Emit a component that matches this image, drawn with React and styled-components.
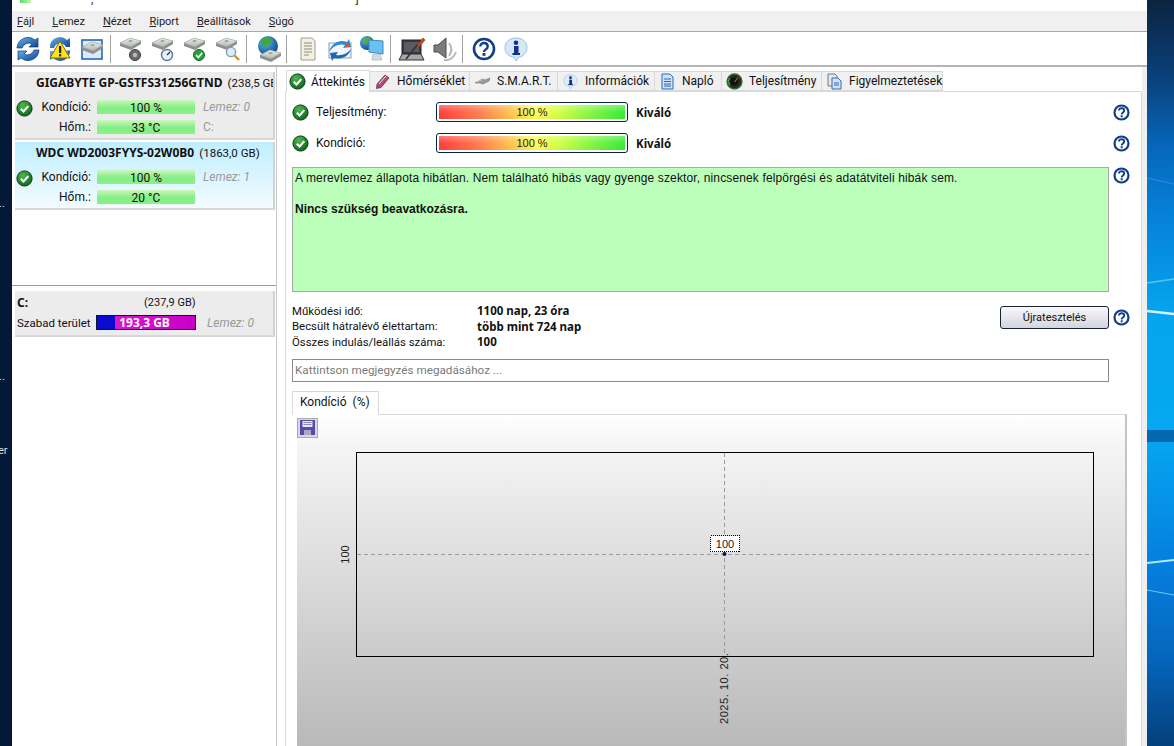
import React from 'react';
import styled, { createGlobalStyle } from 'styled-components';

const GlobalStyle = createGlobalStyle`
  html, body {
    margin: 0;
    padding: 0;
    height: 746px;
    overflow: hidden;
    background: #012;
  }
  * { box-sizing: border-box; }
`;

const UI_FONT = `Roboto, "Noto Sans", sans-serif`;
const ARIAL = `"Liberation Sans", Arial, sans-serif`;

const Desktop = styled.div`
  display: flex;
  width: 1174px;
  height: 746px;
  overflow: hidden;
  font-family: ${UI_FONT};
  font-size: 12px;
  color: #111;
`;

const Wallpaper = styled.svg`
  display: block;
  flex: none;
  width: ${p => p.$w}px;
  height: 746px;
  font-family: ${UI_FONT};
`;

const Win = styled.div`
  flex: none;
  width: 1135px;
  display: flex;
  flex-direction: column;
  background: #fff;
`;

const TitleBar = styled.div`
  height: 11px;
  flex: none;
  display: flex;
  overflow: hidden;
  background: #fff;
  font-size: 12px;
  line-height: 8px;
`;

const AppMark = styled.div`
  width: 11px;
  height: 3px;
  margin-left: 8px;
  background: linear-gradient(90deg, #5fdc5f, #c9f5b8);
`;

const TitleScrap = styled.span`
  margin-top: -5px;
  margin-left: ${p => p.$left}px;
  color: #333;
`;

const MenuBar = styled.div`
  height: 21px;
  flex: none;
  display: flex;
  align-items: center;
  padding-left: 5px;
  gap: 18px;
  background: #f0f0f0;
  border-bottom: 1px solid #a9a9a9;
`;

const MenuItem = styled.span`
  font-size: 11px;
  color: #222;
  span { text-decoration: underline; }
`;

const ToolBar = styled.div`
  height: 35px;
  flex: none;
  display: flex;
  align-items: center;
  background: #fff;
  border-bottom: 2px solid #b4b4b4;
`;

const ToolButton = styled.div`
  width: 32px;
  height: 32px;
  display: flex;
  align-items: center;
  justify-content: center;
  svg { width: 28px; height: 28px; display: block; }
`;

const ToolSep = styled.div`
  width: 1px;
  height: 28px;
  margin: 0 5px 0 2px;
  background: #a0a0a0;
`;

const Body = styled.div`
  flex: 1;
  display: flex;
  min-height: 0;
`;

const Sidebar = styled.aside`
  width: 265px;
  flex: none;
  display: flex;
  flex-direction: column;
  border-right: 1px solid #c8c8c8;
`;

const DiskList = styled.div`
  height: 219px;
  flex: none;
  padding: 5px 1px 0 3px;
  display: flex;
  flex-direction: column;
  gap: 2px;
  border-bottom: 1px solid #9c9c9c;
`;

const VolumeList = styled.div`
  flex: 1;
  padding: 5px 1px 0 3px;
`;

const DiskCard = styled.div`
  height: 68px;
  flex: none;
  padding: 1px 0 0 0;
  overflow: hidden;
  white-space: nowrap;
  background: ${p => (p.$active ? 'linear-gradient(#bfeeff, #f4fcff)' : '#ececec')};
  border-right: 2px solid #d2d2d2;
  border-bottom: 2px solid #d8d8d8;
`;

const DiskName = styled.div`
  margin-left: 21px;
  height: 20px;
  line-height: 20px;
  font-family: "Noto Sans", sans-serif;
  font-size: 12px;
  b { font-weight: 700; margin-right: 2px; }
  span { font-family: ${UI_FONT}; font-size: 11.5px; }
`;

const DiskInfo = styled.div`
  display: flex;
  align-items: flex-start;
  margin-top: 4px;
  padding-left: 1px;
`;

const StatusCol = styled.div`
  width: 16px;
  flex: none;
  margin-top: 3px;
  svg { display: block; width: 17px; height: 17px; }
`;

const Grid = styled.div`
  display: grid;
  grid-template-columns: 59px 98px auto;
  grid-auto-rows: 20px;
  align-items: center;
  column-gap: 6px;
`;

const RowLabel = styled.div`
  text-align: right;
`;

const GreenBar = styled.div`
  height: 14px;
  line-height: 17px;
  text-align: center;
  background: linear-gradient(#cdf7bd, #83ee83 55%, #8cf08c);
`;

const DimText = styled.div`
  margin-left: ${p => p.$ml || 2}px;
  color: #9a9a9a;
  font-style: ${p => (p.$plain ? 'normal' : 'italic')};
`;

const VolumeCard = styled.div`
  height: 46px;
  padding: 3px 0 0 2px;
  background: #ececec;
  border-right: 2px solid #d2d2d2;
  border-bottom: 2px solid #d8d8d8;
`;

const VolumeHead = styled.div`
  display: flex;
  height: 18px;
  line-height: 18px;
  font-size: 11px;
  b { width: 127px; font-family: "Noto Sans", sans-serif; font-size: 12px; }
`;

const VolumeRow = styled.div`
  display: flex;
  align-items: center;
  margin-top: 3px;
  white-space: nowrap;
`;

const VolumeLabel = styled.div`
  width: 79px;
  font-size: 11.5px;
`;

const SpaceBar = styled.div`
  width: 100px;
  height: 15px;
  display: flex;
  border: 1px solid #10103a;
  background: #c800c8;
`;

const SpaceUsed = styled.div`
  width: 18px;
  background: #0a0ad0;
`;

const SpaceFree = styled.div`
  flex: 1;
  text-align: center;
  padding-right: 21px;
  line-height: 14px;
  font-family: "Noto Sans", sans-serif;
  font-size: 12px;
  font-weight: 700;
  color: #fff;
  background: linear-gradient(90deg, #d818c8, #c800c8);
`;

const Main = styled.main`
  flex: 1;
  min-width: 0;
  display: flex;
  flex-direction: column;
  padding: 3px 5px 0 8px;
  background: #fff;
  position: relative;
`;

const RightEdge = styled.div`
  position: absolute;
  top: 0;
  bottom: 0;
  right: 0;
  width: 5px;
  background: #efefef;
`;

const TabBar = styled.div`
  height: 21px;
  flex: none;
  display: flex;
  align-items: flex-end;
`;

const Tab = styled.div`
  width: ${p => p.$w}px;
  height: ${p => (p.$active ? 22 : 20)}px;
  margin-bottom: ${p => (p.$active ? -1 : 0)}px;
  margin-left: ${p => (p.$first ? 1 : 0)}px;
  display: flex;
  align-items: center;
  gap: ${p => (p.$first ? 5 : 6)}px;
  padding-left: ${p => (p.$first ? 2 : 4)}px;
  white-space: nowrap;
  position: relative;
  background: ${p => (p.$active ? '#fff' : '#f0f0f0')};
  border: 1px solid #d9d9d9;
  border-bottom: ${p => (p.$active ? 'none' : '1px solid #d9d9d9')};
  border-left: ${p => (p.$active ? '1px solid #d9d9d9' : 'none')};
  svg { width: 17px; height: 17px; flex: none; }
`;

const TabPanel = styled.section`
  flex: 1;
  min-height: 0;
  padding: 5px 0 0 6px;
  display: flex;
  flex-direction: column;
  border: 1px solid #d9d9d9;
  border-bottom: none;
`;

const Line = styled.div`
  display: flex;
  flex: none;
  align-items: ${p => (p.$top ? 'flex-start' : 'center')};
  margin-top: ${p => p.$mt || 0}px;
`;

const LineBody = styled.div`
  width: 817px;
  flex: none;
  display: flex;
  align-items: ${p => (p.$top ? 'flex-start' : 'center')};
`;

const Help = styled.svg`
  flex: none;
  width: 17px;
  height: 17px;
  margin-left: 4px;
  margin-top: ${p => p.$mt || 0}px;
`;

const GaugeLine = styled.div`
  height: 30px;
  display: flex;
  align-items: center;
  svg { width: 17px; height: 17px; flex: none; }
`;

const GaugeLabel = styled.div`
  width: 127px;
  padding-left: 7px;
`;

const GaugeFrame = styled.div`
  width: 192px;
  height: 20px;
  padding: 2px;
  border: 1px solid #0c2438;
  border-radius: 3px;
  background: #fff;
`;

const GaugeFill = styled.div`
  height: 100%;
  text-align: center;
  line-height: 14px;
  font-family: ${ARIAL};
  font-size: 11px;
  color: #222;
  background:
    linear-gradient(rgba(255,255,255,.3), rgba(255,255,255,0) 50%, rgba(0,0,0,.03)),
    linear-gradient(90deg, #ff4040, #ff8050 22%, #ffcc50 40%, #ffff5a 52%, #ccff48 66%, #78f444 85%, #3cec3c);
`;

const GaugeValue = styled.b`
  margin-left: 8px;
  font-family: "Noto Sans", sans-serif;
  font-size: 11.5px;
`;

const StatusBox = styled.div`
  width: 817px;
  height: 125px;
  padding: 3px 2px;
  flex: none;
  font-family: ${ARIAL};
  font-size: 12px;
  line-height: 15px;
  background: #bbffbb;
  border: 1px solid #a8a8a8;
  p { margin: 0 0 16px; letter-spacing: .135px; }
  b { font-weight: 700; }
`;

const Stats = styled.div`
  flex: 1;
  display: grid;
  grid-template-columns: 185px auto;
  grid-auto-rows: 15.5px;
  align-items: center;
  font-size: 11.4px;
  b { font-family: "Noto Sans", sans-serif; font-size: 11.5px; font-weight: 700; }
`;

const RetestButton = styled.div`
  width: 109px;
  height: 23px;
  margin-top: 3px;
  flex: none;
  display: flex;
  align-items: center;
  justify-content: center;
  border: 1px solid #1a2238;
  border-radius: 3px;
  font-size: 11px;
  background: linear-gradient(#f8f8fa, #d4d4de);
`;

const NoteInput = styled.input`
  display: block;
  width: 817px;
  height: 23px;
  flex: none;
  margin: 9px 0 0;
  padding: 0 2px;
  border: 1px solid #8a8a8a;
  outline: none;
  font-family: ${UI_FONT};
  font-size: 11.7px;
  &::placeholder { color: #7a7a7a; opacity: 1; }
`;

const ChartTab = styled.div`
  width: 87px;
  height: 24px;
  margin-top: 9px;
  margin-bottom: -1px;
  flex: none;
  padding-left: 7px;
  line-height: 21px;
  white-space: pre;
  position: relative;
  background: #fff;
  border: 1px solid #d9d9d9;
  border-bottom: none;
`;

const ChartPanel = styled.div`
  width: 835px;
  flex: 1;
  min-height: 0;
  padding-left: 5px;
  overflow: hidden;
  background: #fff;
  border-top: 1px solid #d9d9d9;
  border-right: 2px solid #c4c4c4;
`;

const ChartArea = styled.div`
  height: 100%;
  background: linear-gradient(#ffffff, #f4f4f4 10%, #b9b9b9 100%);
`;

const SaveButton = styled.div`
  width: 21px;
  height: 20px;
  display: flex;
  align-items: center;
  justify-content: center;
  position: relative;
  top: 3px;
  background: #d8d8e8;
  border: 1px solid #aaa;
  svg { width: 17px; height: 17px; display: block; }
`;

const ChartSvg = styled.svg`
  display: block;
  width: 828px;
  height: 308px;
  margin-top: 3px;
`;

const Defs = styled.svg`
  position: absolute;
  width: 0;
  height: 0;
`;

const SharedDefs = () => (
  <Defs aria-hidden="true">
    <defs>
      <linearGradient id="diskTop" x1="0" y1="0" x2="0" y2="1">
        <stop offset="0" stopColor="#eceeec" />
        <stop offset="1" stopColor="#b0b4b0" />
      </linearGradient>
      <linearGradient id="blueGrad" x1="0" y1="0" x2="1" y2="1">
        <stop offset="0" stopColor="#6cb4ea" />
        <stop offset="1" stopColor="#0d3f8e" />
      </linearGradient>
      <radialGradient id="greenBall" cx="0.4" cy="0.3" r="0.8">
        <stop offset="0" stopColor="#4fb84f" />
        <stop offset="1" stopColor="#0a5a1a" />
      </radialGradient>
      <radialGradient id="globe" cx="0.35" cy="0.3" r="0.8">
        <stop offset="0" stopColor="#5bb8f0" />
        <stop offset="1" stopColor="#0a3f8a" />
      </radialGradient>
      <linearGradient id="wallR" x1="0" y1="0" x2="0" y2="1">
        <stop offset="0" stopColor="#0b2440" />
        <stop offset="0.1" stopColor="#0a3f78" />
        <stop offset="0.2" stopColor="#0668bc" />
        <stop offset="0.3" stopColor="#0584dc" />
        <stop offset="0.42" stopColor="#06a4ee" />
        <stop offset="0.58" stopColor="#05a8f2" />
        <stop offset="0.75" stopColor="#0580e0" />
        <stop offset="0.88" stopColor="#0666bc" />
        <stop offset="1" stopColor="#04407c" />
      </linearGradient>
    </defs>
  </Defs>
);

const CheckBall = () => (
  <svg viewBox="0 0 17 17">
    <circle cx="8.5" cy="8.5" r="7.6" fill="url(#greenBall)" stroke="#0b3d12" />
    <path d="M4.8 8.8l2.7 2.7 4.8-5.4" fill="none" stroke="#fff" strokeWidth="2.1" />
  </svg>
);

const HelpIcon = ({ mt }) => (
  <Help viewBox="0 0 17 17" $mt={mt}>
    <circle cx="8.5" cy="8.5" r="7" fill="#fff" stroke="#123f86" strokeWidth="2.2" />
    <path d="M6 6.6c0-3.1 5.2-3 5.2 0 0 1.9-2.5 1.9-2.5 3.8" fill="none" stroke="#123f86" strokeWidth="1.9" />
    <rect x="7.7" y="11.3" width="2" height="2" fill="#123f86" />
  </Help>
);

// shared grey drive drawing, used by most of the toolbar icons
const Drive = ({ y = 0 }) => (
  <g transform={`translate(0 ${y})`}>
    <path d="M1 9 L11 4 L22 7 L22 10 L12 16 L1 12 Z" fill="#8c908c" />
    <path d="M1 9 L11 4 L22 7 L12 13 Z" fill="url(#diskTop)" stroke="#9a9e9a" strokeWidth=".5" />
    <path d="M9 7 l3 -1 l2 1 l-3 1 z" fill="#7fa06a" />
  </g>
);

const RefreshIcon = () => (
  <svg viewBox="0 0 28 28">
    <path d="M3 13A11 11 0 0 1 21 5l3-2v9h-9l3-3A7 7 0 0 0 8 13z" fill="url(#blueGrad)" stroke="#0b3a80" strokeWidth=".7" />
    <path d="M25 15A11 11 0 0 1 7 23l-3 2v-9h9l-3 3a7 7 0 0 0 10-4z" fill="url(#blueGrad)" stroke="#0b3a80" strokeWidth=".7" />
  </svg>
);

const WarnRefreshIcon = () => (
  <svg viewBox="0 0 28 28">
    <path d="M4 13A10 10 0 0 1 21 5l3-2v9h-4A6.5 6.5 0 0 0 8 13z" fill="url(#blueGrad)" />
    <path d="M24 15A10 10 0 0 1 7 23l-3 2v-9h4a6.5 6.5 0 0 0 12 0z" fill="url(#blueGrad)" />
    <path d="M14 6L24 23H4z" fill="#ffe11a" stroke="#8a6a00" />
    <rect x="13" y="11" width="2.2" height="7" fill="#222" />
    <rect x="13" y="19.200" width="2.2" height="2.2" fill="#222" />
  </svg>
);

const BoxDiskIcon = () => (
  <svg viewBox="0 0 28 28">
    <rect x="4" y="5" width="20" height="19" fill="#dce9f7" stroke="#2468b8" strokeWidth="1.6" />
    <g transform="translate(3 3)"><Drive /></g>
  </svg>
);

const SpeakerDiskIcon = () => (
  <svg viewBox="0 0 28 28">
    <g transform="translate(1 -1)"><Drive /></g>
    <circle cx="17" cy="20" r="5.500" fill="#6a6a6a" stroke="#3a3a3a" />
    <circle cx="17" cy="20" r="2.200" fill="#bbb" />
  </svg>
);

const ClockDiskIcon = () => (
  <svg viewBox="0 0 28 28">
    <g transform="translate(1 -1)"><Drive /></g>
    <circle cx="17" cy="20" r="5.500" fill="#e8f0f8" stroke="#5a7a9a" strokeWidth="1.4" />
    <path d="M17 20l3-3" stroke="#333" strokeWidth="1.2" />
  </svg>
);

const CheckDiskIcon = () => (
  <svg viewBox="0 0 28 28">
    <g transform="translate(1 -1)"><Drive /></g>
    <circle cx="17" cy="20" r="5.500" fill="#27a03a" stroke="#11662a" />
    <path d="M14 20l2.300 2.400 4-4.600" fill="none" stroke="#fff" strokeWidth="1.700" />
  </svg>
);

const SearchDiskIcon = () => (
  <svg viewBox="0 0 28 28">
    <g transform="translate(1 -1)"><Drive /></g>
    <circle cx="17" cy="17" r="4.600" fill="#d8ecfa" stroke="#8a9aaa" strokeWidth="1.400" />
    <path d="M20.500 20.500l4.500 4.500" stroke="#c8962a" strokeWidth="2.400" />
  </svg>
);

const GlobeDiskIcon = () => (
  <svg viewBox="0 0 28 28">
    <circle cx="14" cy="11" r="10" fill="url(#globe)" />
    <path d="M9 3c4-1 8 0 10 3-1 3-5 2-6 5-2 2-4 0-6-2-1-2 0-4 2-6z" fill="#3fa83f" />
    <g transform="translate(5 11)"><Drive /></g>
  </svg>
);

const DocIcon = () => (
  <svg viewBox="0 0 28 28">
    <path d="M7 3h11l3 3v19H7z" fill="#f4f0e2" stroke="#a0a090" />
    <path d="M10 8h8M10 11h8M10 14h8M10 17h8M10 20h5" stroke="#8a8a7a" strokeWidth="1" />
  </svg>
);

const MailIcon = () => (
  <svg viewBox="0 0 28 28">
    <rect x="3" y="8" width="22" height="15" fill="#f2f6fa" stroke="#8aa0b8" />
    <path d="M3 17c2-8 10-13 18-10l2-3 2 8-8 1 2-3c-6-2-12 1-16 7z" fill="#2a8ad8" />
    <path d="M25 14c-2 7-9 11-17 9l-2 3-2-8 8-1-2 3c6 1 11-1 15-6z" fill="#1a66b8" />
    <rect x="19" y="9" width="4" height="3" fill="#c85a3a" />
  </svg>
);

const NetIcon = () => (
  <svg viewBox="0 0 28 28">
    <circle cx="9" cy="8" r="7" fill="url(#globe)" />
    <path d="M5 4c3-2 6-2 8 0 0 3-3 3-4 5-2 1-4-2-4-5z" fill="#4fae3f" />
    <path d="M11 5l14 1v13l-14 -2z" fill="#6cc0f0" stroke="#3a88c0" />
    <path d="M15 19h7l2 6h-10z" fill="#d4dce2" stroke="#9aa" strokeWidth=".6" />
  </svg>
);

const LaptopIcon = () => (
  <svg viewBox="0 0 28 28">
    <rect x="4" y="5" width="19" height="14" fill="#3a3a44" stroke="#222" />
    <rect x="6" y="7" width="15" height="10" fill="#5a5a66" />
    <path d="M1 25l3-6h19l3 6z" fill="#a8a8a8" stroke="#333" />
    <path d="M8 24L20 9" stroke="#333" strokeWidth="1.600" />
    <path d="M19 10l6-7 2 2-6 7z" fill="#c8481e" stroke="#7a2a10" strokeWidth=".6" />
  </svg>
);

const SpeakerIcon = () => (
  <svg viewBox="0 0 28 28">
    <path d="M4 10h4l8-7v20l-8-6H4z" fill="#7c7c7c" stroke="#4a4a4a" />
    <path d="M19 8c3 4 3 9 0 13M14 25c6 1 10-3 12-8" fill="none" stroke="#b8b8b8" strokeWidth="2" />
  </svg>
);

const BigHelpIcon = () => (
  <svg viewBox="0 0 28 28">
    <circle cx="14" cy="14" r="10" fill="#fff" stroke="#123f86" strokeWidth="2.600" />
    <path d="M10.300 11.500c0-4.800 7.400-4.600 7.400 0 0 2.900-3.700 2.800-3.700 5.400" fill="none" stroke="#123f86" strokeWidth="2.400" />
    <rect x="12.500" y="18" width="3" height="2.800" fill="#123f86" />
  </svg>
);

const InfoBubbleIcon = ({ small }) => (
  <svg viewBox="0 0 28 28">
    <path d="M14 3c6.500 0 11 4 11 9.500S20.500 22 17 22l-3 4-2-4C7 22 3 18 3 12.500S7.500 3 14 3z" fill={small ? '#dcebf8' : '#d6e8f8'} stroke="#9cc0e0" />
    <rect x="12" y="11" width="4.500" height="8.500" fill="#12328a" />
    <rect x="10.500" y="18" width="7.500" height="2" fill="#12328a" />
    <circle cx="14" cy="7.800" r="2.300" fill="#12328a" />
  </svg>
);

const ThermoIcon = () => (
  <svg viewBox="0 0 17 17">
    <path d="M3 11L11 2l4 3-8 9.500-4.500 1z" fill="#b04a78" stroke="#5a2440" strokeWidth=".7" />
    <path d="M5 11l7-8" stroke="#eee" strokeWidth="1" />
  </svg>
);

const SmallDiskIcon = () => (
  <svg viewBox="0 0 17 17">
    <path d="M1 10l7-4 3 1 5-2-1 3-6 3-3-1z" fill="#9a9a9a" stroke="#666" strokeWidth=".5" />
    <path d="M3 9l5-2.500" stroke="#ddd" strokeWidth=".8" />
  </svg>
);

const LogDocIcon = () => (
  <svg viewBox="0 0 17 17">
    <path d="M3 1h8l3 3v12H3z" fill="#cfe2f8" stroke="#2a6ab8" />
    <path d="M5 6h7M5 8.500h7M5 11h7M5 13h7" stroke="#2a6ab8" strokeWidth="1" />
  </svg>
);

const GaugeIcon = () => (
  <svg viewBox="0 0 17 17">
    <circle cx="8.500" cy="8.500" r="7.500" fill="#20301f" stroke="#3a6a2a" strokeWidth="1.300" />
    <circle cx="8.500" cy="8.500" r="4" fill="#111" />
    <path d="M8.500 9L12 4.500" stroke="#e84a2a" strokeWidth="1.200" />
    <path d="M3.500 12a6 6 0 0 1 0-7" fill="none" stroke="#4fc84f" strokeWidth="1" />
  </svg>
);

const AlertsIcon = () => (
  <svg viewBox="0 0 17 17">
    <path d="M2 1h7l2 2v10H2z" fill="#e4e8ee" stroke="#6a7a8a" />
    <path d="M6 5h6l3 3v8H6z" fill="#cfe2f8" stroke="#3a6aa8" />
    <path d="M8 10h5M8 12h5" stroke="#3a6aa8" />
  </svg>
);

const SaveIcon = () => (
  <svg viewBox="0 0 17 17">
    <path d="M1 1h15v15H1z" fill="#5a4aa8" />
    <rect x="3.500" y="2" width="10" height="6" fill="#e8e8f4" />
    <path d="M4.500 3.500h8M4.500 5.500h8" stroke="#8a8ab8" />
    <rect x="5" y="11" width="7" height="5" fill="#a8a8c8" />
  </svg>
);

const menus = [
  ['F', 'ájl'],
  ['L', 'emez'],
  ['N', 'ézet'],
  ['R', 'iport'],
  ['B', 'eállítások'],
  ['S', 'úgó'],
];

const toolGroups = [
  [RefreshIcon, WarnRefreshIcon, BoxDiskIcon],
  [SpeakerDiskIcon, ClockDiskIcon, CheckDiskIcon, SearchDiskIcon],
  [GlobeDiskIcon],
  [DocIcon, MailIcon, NetIcon],
  [LaptopIcon, SpeakerIcon],
  [BigHelpIcon, InfoBubbleIcon],
];

const tabs = [
  { label: 'Áttekintés', w: 84, Icon: CheckBall, active: true },
  { label: 'Hőmérséklet', w: 100, Icon: ThermoIcon },
  { label: 'S.M.A.R.T.', w: 88, Icon: SmallDiskIcon },
  { label: 'Információk', w: 97, Icon: () => <InfoBubbleIcon small /> },
  { label: 'Napló', w: 67, Icon: LogDocIcon },
  { label: 'Teljesítmény', w: 100, Icon: GaugeIcon },
  { label: 'Figyelmeztetések', w: 121, Icon: AlertsIcon },
];

const disks = [
  { name: 'GIGABYTE GP-GSTFS31256GTND', size: '(238,5 GB)', health: '100 %', temp: '33 °C', index: 'Lemez: 0', vol: 'C:' },
  { name: 'WDC WD2003FYYS-02W0B0', size: '(1863,0 GB)', health: '100 %', temp: '20 °C', index: 'Lemez: 1', active: true },
];

const stats = [
  ['Működési idő:', '1100 nap, 23 óra'],
  ['Becsült hátralévő élettartam:', 'több mint 724 nap'],
  ['Összes indulás/leállás száma:', '100'],
];

const Gauge = ({ label }) => (
  <GaugeLine>
    <CheckBall />
    <GaugeLabel>{label}</GaugeLabel>
    <GaugeFrame><GaugeFill>100 %</GaugeFill></GaugeFrame>
    <GaugeValue>Kiváló</GaugeValue>
  </GaugeLine>
);

const App = () => (
  <Desktop>
    <GlobalStyle />
    <SharedDefs />
    <Wallpaper $w={12} viewBox="0 0 12 746">
      <rect width="12" height="746" fill="#021a38" />
      <text x="-1" y="207" fontSize="11" fill="#ddd">..</text>
      <text x="-1" y="380" fontSize="11" fill="#ddd">..</text>
      <text x="-2" y="454" fontSize="11" fill="#ddd">er</text>
    </Wallpaper>
    <Win>
      <TitleBar>
        <AppMark />
        <TitleScrap $left={60}>,</TitleScrap>
        <TitleScrap $left={262}>]</TitleScrap>
      </TitleBar>
      <MenuBar>
        {menus.map(([key, rest]) => (
          <MenuItem key={key}><span>{key}</span>{rest}</MenuItem>
        ))}
      </MenuBar>
      <ToolBar>
        {toolGroups.map((group, i) => (
          <React.Fragment key={i}>
            {i > 0 && <ToolSep />}
            {group.map((Icon, j) => <ToolButton key={j}><Icon /></ToolButton>)}
          </React.Fragment>
        ))}
      </ToolBar>
      <Body>
        <Sidebar>
          <DiskList>
            {disks.map(d => (
              <DiskCard key={d.name} $active={d.active}>
                <DiskName><b>{d.name}</b> <span>{d.size}</span></DiskName>
                <DiskInfo>
                  <StatusCol><CheckBall /></StatusCol>
                  <Grid>
                    <RowLabel>Kondíció:</RowLabel>
                    <GreenBar>{d.health}</GreenBar>
                    <DimText>{d.index}</DimText>
                    <RowLabel>Hőm.:</RowLabel>
                    <GreenBar>{d.temp}</GreenBar>
                    <DimText $plain>{d.vol}</DimText>
                  </Grid>
                </DiskInfo>
              </DiskCard>
            ))}
          </DiskList>
          <VolumeList>
            <VolumeCard>
              <VolumeHead><b>C:</b><span>(237,9 GB)</span></VolumeHead>
              <VolumeRow>
                <VolumeLabel>Szabad terület</VolumeLabel>
                <SpaceBar>
                  <SpaceUsed />
                  <SpaceFree>193,3 GB</SpaceFree>
                </SpaceBar>
                <DimText $ml={11}>Lemez: 0</DimText>
              </VolumeRow>
            </VolumeCard>
          </VolumeList>
        </Sidebar>
        <Main>
          <RightEdge />
          <TabBar>
            {tabs.map(({ label, w, Icon, active }, i) => (
              <Tab key={label} $w={w} $active={active} $first={i === 0}>
                <Icon />
                {label}
              </Tab>
            ))}
          </TabBar>
          <TabPanel>
            <Line>
              <LineBody><Gauge label="Teljesítmény:" /></LineBody>
              <HelpIcon />
            </Line>
            <Line $mt={1}>
              <LineBody><Gauge label="Kondíció:" /></LineBody>
              <HelpIcon />
            </Line>
            <Line $top $mt={9}>
              <StatusBox>
                <p>A merevlemez állapota hibátlan. Nem található hibás vagy gyenge szektor, nincsenek felpörgési és adatátviteli hibák sem.</p>
                <b>Nincs szükség beavatkozásra.</b>
              </StatusBox>
              <HelpIcon mt={0} />
            </Line>
            <Line $top $mt={11}>
              <LineBody $top>
                <Stats>
                  {stats.map(([k, v]) => (
                    <React.Fragment key={k}>
                      <div>{k}</div>
                      <b>{v}</b>
                    </React.Fragment>
                  ))}
                </Stats>
                <RetestButton>Újratesztelés</RetestButton>
              </LineBody>
              <HelpIcon mt={6} />
            </Line>
            <NoteInput placeholder="Kattintson megjegyzés megadásához ..." readOnly />
            <ChartTab>{'Kondíció  (%)'}</ChartTab>
            <ChartPanel>
              <ChartArea>
                <SaveButton><SaveIcon /></SaveButton>
                <ChartSvg viewBox="5 0 828 308" fontFamily={ARIAL} fontSize="11">
                  <rect x="64.500" y="14.500" width="737" height="204" fill="none" stroke="#000" />
                  <path d="M432.500 15V218M65 116.500H801" stroke="#9a9a9a" strokeDasharray="4 3" />
                  <rect x="418.500" y="97.500" width="29" height="16" fill="#fff" stroke="#000" strokeDasharray="1 1" shapeRendering="crispEdges" />
                  <text x="433" y="109.500" textAnchor="middle" fill="#222">100</text>
                  <circle cx="432.500" cy="116" r="2" fill="#101050" />
                  <text transform="translate(57 116.500) rotate(-90)" textAnchor="middle" fill="#222">100</text>
                  <text transform="translate(436 286) rotate(-90)" fill="#222" letterSpacing=".55">2025. 10. 20.</text>
                </ChartSvg>
              </ChartArea>
            </ChartPanel>
          </TabPanel>
        </Main>
      </Body>
    </Win>
    <Wallpaper $w={27} viewBox="0 0 27 746">
      <rect width="27" height="746" fill="url(#wallR)" />
      <rect y="430" width="27" height="12" fill="#0567ae" />
      <path d="M0 178l27 6" stroke="#2a90e0" strokeWidth="1" />
      <path d="M0 283l27 -4" stroke="#5cc0f0" strokeWidth="1.500" />
      <path d="M0 311l27 3" stroke="#d4f2fc" strokeWidth="2.500" />
      <path d="M0 563l27 -3" stroke="#b4e6fa" strokeWidth="2" />
      <path d="M0 590l27 5" stroke="#6cc8f4" strokeWidth="1" />
    </Wallpaper>
  </Desktop>
);

export default App;
